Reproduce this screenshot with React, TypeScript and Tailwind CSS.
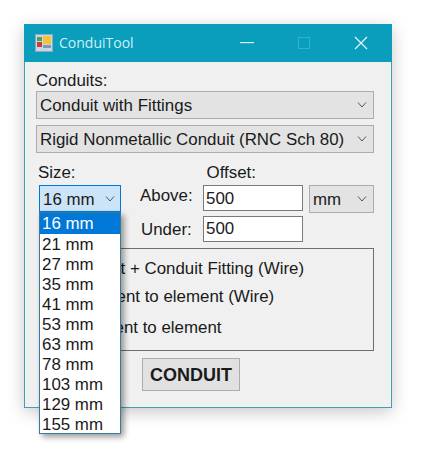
import React from "react";

const sizes = ["16 mm", "21 mm", "27 mm", "35 mm", "41 mm", "53 mm", "63 mm", "78 mm", "103 mm", "129 mm", "155 mm"];

function Chevron() {
  return (
    <svg width="10" height="6" viewBox="0 0 10 6" fill="none" stroke="#555" strokeWidth="1">
      <path d="M1 .5l4 4.5 4-4.5" />
    </svg>
  );
}

function Combo({ label, className }: { label: string; className: string }) {
  return (
    <div className={`flex items-center justify-between border border-[#adadad] bg-[#e3e3e3] pl-[3px] pr-[6px] ${className}`}>
      <span className="pt-[2px] leading-[22px]">{label}</span>
      <Chevron />
    </div>
  );
}

function AppIcon() {
  return (
    <svg width="18" height="18" viewBox="0 0 18 18">
      <rect x="0" y="0" width="18" height="18" fill="#8fa9c4" />
      <rect x="1" y="1" width="16" height="16" fill="#c9d6e4" />
      <rect x="2" y="3" width="5" height="4" fill="#4f9e5a" />
      <rect x="8" y="2" width="8" height="8" fill="#f4c437" />
      <rect x="2" y="8" width="5" height="5" fill="#c9403a" />
      <rect x="8" y="11" width="8" height="3" fill="#7d97b5" />
    </svg>
  );
}

export default function App() {
  return (
    <div className="h-[468px] bg-white p-[24px] font-['Liberation_Sans',Arial,sans-serif] text-[16.9px] leading-[20px] text-[#1a1a1a]">
      <div className="relative h-[384px] w-[368px] border border-t-0 border-[#3f9fb5] bg-[#f0f0f0] shadow-[0_4px_16px_rgba(0,0,0,0.22)]">
        {/* Title bar */}
        <div className="-mx-px flex h-[38px] items-center bg-[#0b9dbc] pl-[11px] text-[#c8f2fa]">
          <AppIcon />
          <span className="ml-[6px] font-['Open_Sans',sans-serif] text-[14px]">ConduiTool</span>
          <div className="ml-auto flex items-center">
            <svg width="14" height="2" viewBox="0 0 14 2" className="mr-[44px]">
              <rect width="14" height="1.2" fill="#d5f5fb" />
            </svg>
            <div className="mr-[44px] h-[12px] w-[12px] border border-[#2fb4d0]" />
            <svg width="14" height="14" viewBox="0 0 14 14" stroke="#e4f9fd" strokeWidth="1.2" className="mr-[24px]">
              <path d="M1 1l12 12M13 1L1 13" />
            </svg>
          </div>
        </div>

        <div className="pl-[11px] pr-[17px]">
          <div className="mt-[9px]">Conduits:</div>
          <Combo label="Conduit with Fittings" className="h-[28px]" />
          <Combo label="Rigid Nonmetallic Conduit (RNC Sch 80)" className="mt-[6px] h-[28px]" />

          <div className="mt-[10px] flex">
            <span className="ml-[2px]">Size:</span>
            <span className="ml-[131px]">Offset:</span>
          </div>

          {/* Size and offset row */}
          <div className="mt-[2px] flex items-start">
            <div className="ml-[3px] flex h-[27px] w-[82px] items-center justify-between border border-[#0078d7] bg-[#cce4f7] pl-[3px] pr-[5px]">
              <span className="pt-[2px] leading-[22px]">16 mm</span>
              <Chevron />
            </div>
            <div className="ml-[19px] flex w-[63px] flex-col">
              <span className="h-[32px] leading-[22px]">Above:</span>
              <span className="ml-[1px] mt-[1px] leading-[24px]">Under:</span>
            </div>
            <div className="flex flex-col gap-[5px]">
              <div className="h-[26px] w-[100px] border border-[#7a7a7a] bg-white pl-[2px] leading-[26px]">500</div>
              <div className="h-[26px] w-[100px] border border-[#7a7a7a] bg-white pl-[2px] leading-[24px]">500</div>
            </div>
            <Combo label="mm" className="ml-[6px] h-[28px] w-[65px]" />
          </div>

          {/* Group box, its left edge sits behind the open list */}
          <div className="ml-[10px] mt-[6px] flex h-[103px] flex-col gap-[8px] border border-[#6e6e6e] pl-[20px] pt-[10px]">
            <span>Conduit + Conduit Fitting (Wire)</span>
            <span className="ml-[11px]">Element to element (Wire)</span>
            <span className="ml-[9px] mt-[3px]">Element to element</span>
          </div>

          <div className="mt-[7px] flex">
            <button className="ml-[106px] h-[33px] w-[98px] border border-[#adadad] bg-[#e1e1e1] text-[18px] font-bold">CONDUIT</button>
          </div>
        </div>

        {/* Open dropdown list */}
        <div className="absolute left-[14px] top-[188px] h-[222px] w-[82px] overflow-hidden border border-[#3b7a9a] bg-white shadow-[3px_3px_6px_rgba(0,0,0,0.4)]">
          {sizes.map((s, i) => (
            <div key={s} className={`pl-[2px] leading-[22px] ${i === 0 ? "h-[21px] bg-[#0078d7] text-white" : "h-[20px]"}`}>
              {s}
            </div>
          ))}
        </div>
      </div>
    </div>
  );
}
